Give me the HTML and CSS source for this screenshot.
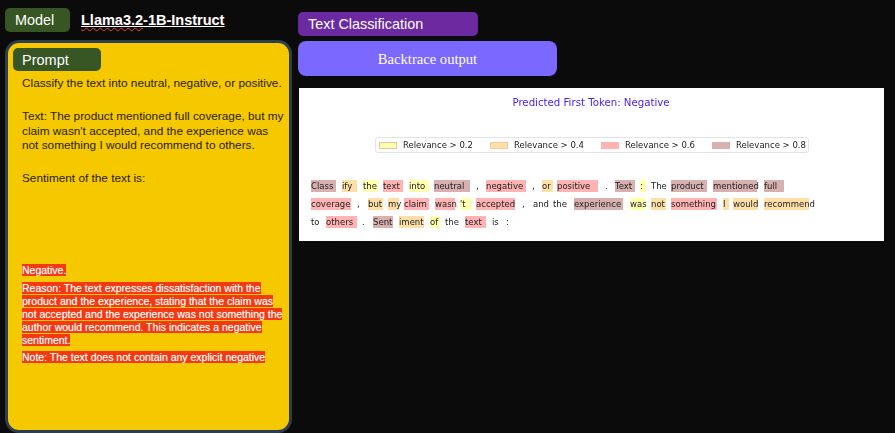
FILE: index.html
```html
<!DOCTYPE html>
<html lang="en">
<head>
<meta charset="utf-8">
<title>Backtrace output</title>
<link rel="stylesheet" href="styles.css">
</head>
<body>
<div class="app">
  <section class="left">
    <div class="model-row">
      <div class="badge model-badge">Model</div>
      <div class="model-name"><span class="misspelt">Llama3.2</span>-1B-Instruct</div>
    </div>
    <div class="panel">
      <div class="badge prompt-badge">Prompt</div>
      <div class="prompt">
        <p>Classify the text into neutral, negative, or positive.</p>
        <p>Text: The product mentioned full coverage, but my claim wasn't accepted, and the experience was not something I would recommend to others.</p>
        <p>Sentiment of the text is:</p>
      </div>
      <div class="output">
        <p><span>Negative.</span></p>
        <p><span>Reason: The text expresses dissatisfaction with the product and the experience, stating that the claim was not accepted and the experience was not something the author would recommend. This indicates a negative sentiment.</span></p>
        <p><span>Note: The text does not contain any explicit negative</span></p>
      </div>
    </div>
  </section>
  <section class="right">
    <div class="task">Text Classification</div>
    <div class="backtrace">Backtrace output</div>
    <div class="plot">
      <div class="plot-title">Predicted First Token: Negative</div>
      <div class="legend">
        <span class="key"><i class="swatch r2"></i>Relevance &gt; 0.2</span>
        <span class="key"><i class="swatch r4"></i>Relevance &gt; 0.4</span>
        <span class="key"><i class="swatch r6"></i>Relevance &gt; 0.6</span>
        <span class="key"><i class="swatch r8"></i>Relevance &gt; 0.8</span>
      </div>
      <div class="tokens">
        <div class="row">
          <span class="t r8" style="margin-left:0;width:25px">Class</span>
          <span class="t r4" style="margin-left:6px;width:15px">ify</span>
          <span class="t r2" style="margin-left:6px;width:15px">the</span>
          <span class="t r6" style="margin-left:5px;width:20px">text</span>
          <span class="t r2" style="margin-left:6px;width:20px">into</span>
          <span class="t r8" style="margin-left:5px;width:36px">neutral</span>
          <span class="t" style="margin-left:6px;width:4px">,</span>
          <span class="t r6" style="margin-left:6px;width:40px">negative</span>
          <span class="t" style="margin-left:6px;width:4px">,</span>
          <span class="t r4" style="margin-left:6px;width:11px">or</span>
          <span class="t r6" style="margin-left:4px;width:41px">positive</span>
          <span class="t" style="margin-left:7px;width:4px">.</span>
          <span class="t r8" style="margin-left:6px;width:20px">Text</span>
          <span class="t r2" style="margin-left:5px;width:6px">:</span>
          <span class="t" style="margin-left:5px;width:16px">The</span>
          <span class="t r8" style="margin-left:4px;width:36px">product</span>
          <span class="t r8" style="margin-left:6px;width:44px">mentioned</span>
          <span class="t r8" style="margin-left:7px;width:20px">full</span>
        </div>
        <div class="row">
          <span class="t r6" style="margin-left:0;width:40px">coverage</span>
          <span class="t" style="margin-left:6px;width:4px">,</span>
          <span class="t r4" style="margin-left:7px;width:15px">but</span>
          <span class="t r4" style="margin-left:5px;width:11px">my</span>
          <span class="t r6" style="margin-left:5px;width:25px">claim</span>
          <span class="t r6" style="margin-left:6px;width:20px">wasn</span>
          <span class="t r2" style="margin-left:5px;width:11px">'t</span>
          <span class="t r6" style="margin-left:5px;width:39px">accepted</span>
          <span class="t" style="margin-left:7px;width:4px">,</span>
          <span class="t" style="margin-left:7px;width:15px">and</span>
          <span class="t" style="margin-left:5px;width:15px">the</span>
          <span class="t r8" style="margin-left:6px;width:49px">experience</span>
          <span class="t r2" style="margin-left:7px;width:16px">was</span>
          <span class="t r4" style="margin-left:5px;width:15px">not</span>
          <span class="t r6" style="margin-left:5px;width:46px">something</span>
          <span class="t r4" style="margin-left:6px;width:6px">I</span>
          <span class="t r4" style="margin-left:4px;width:25px">would</span>
          <span class="t r4" style="margin-left:6px;width:45px">recommend</span>
        </div>
        <div class="row">
          <span class="t" style="margin-left:0;width:10px">to</span>
          <span class="t r6" style="margin-left:5px;width:31px">others</span>
          <span class="t" style="margin-left:5px;width:4px">.</span>
          <span class="t r8" style="margin-left:7px;width:20px">Sent</span>
          <span class="t r4" style="margin-left:6px;width:25px">iment</span>
          <span class="t r2" style="margin-left:6px;width:10px">of</span>
          <span class="t" style="margin-left:5px;width:15px">the</span>
          <span class="t r6" style="margin-left:5px;width:21px">text</span>
          <span class="t" style="margin-left:6px;width:8px">is</span>
          <span class="t" style="margin-left:6px;width:4px">:</span>
        </div>
      </div>
    </div>
  </section>
</div>
</body>
</html>
```
FILE: styles.css
```css
* { box-sizing: border-box; }
html, body { margin: 0; height: 100%; overflow: hidden; }
body { background: #0b0b0b; font-family: "Liberation Sans", Arial, sans-serif; color: #fff; }
.app { display: flex; height: 433px; padding-left: 5px; }
.left { width: 287px; display: flex; flex-direction: column; padding-top: 8px; }
.badge { background: #375623; border-radius: 5px; color: #fff; }
.model-row { display: flex; align-items: flex-start; gap: 11px; height: 32px; }
.model-badge { width: 65px; height: 24px; padding-left: 10px; font-size: 14.4px; line-height: 24px; }
.model-name { font-size: 14.5px; font-weight: 700; line-height: 25px; text-decoration: underline; text-shadow: 1px 0 0 rgba(60,20,20,.6); }
.misspelt { text-decoration: underline wavy #d04040 1px; text-underline-offset: 2px; }
.panel { height: 393px; background: #f5c800; border: 3px solid #2c3e50; border-radius: 14px; padding: 5px 5px 0; color: #2a1c00; }
.prompt-badge { width: 88px; height: 23px; padding-left: 9px; font-size: 14.5px; line-height: 24px; }
.prompt { padding: 0 0 0 9px; font-size: 11.8px; line-height: 14.6px; margin-top: 5px; }
.prompt p { margin: 0 0 18.5px; }
.output { padding: 0 0 0 9px; margin-top: 78px; font-size: 10.5px; line-height: 12.9px; color: #fff; text-shadow: 0 0 1px rgba(255,255,255,.5); }
.output p { margin: 0 0 5px; }
.output span { background: #f4380f; }
.right { padding: 12px 0 0 6px; width: 591px; }
.task { width: 180px; height: 24px; background: #6c2aa0; border-radius: 5px; padding-left: 10px; font-size: 14.4px; line-height: 24px; }
.backtrace { width: 259px; height: 35px; margin-top: 5px; background: #7b68ff; border-radius: 8px; text-align: center; font-family: "Liberation Serif", serif; font-size: 14.6px; line-height: 36px; }
.plot { width: 585px; height: 153px; margin: 12px 0 0 1px; background: #fff; padding-top: 8px; color: #222; font-family: "DejaVu Sans", sans-serif; font-size: 8.5px; }
.plot-title { text-align: center; color: #4a22f0; font-size: 10.2px; line-height: 13px; margin-left: -1px; filter: blur(.25px); }
.legend { display: flex; gap: 15px; width: 434px; height: 16px; margin: 28px 0 0 76px; padding-left: 3px; border: 1px solid #e4e4e4; border-radius: 3px; align-items: center; white-space: nowrap; filter: blur(.3px); }
.key { display: flex; align-items: center; width: 96px; }
.swatch { display: block; width: 18px; height: 7px; margin-right: 6px; }
.swatch.r2 { border: 1px solid #f5c0a0; }
.swatch.r4 { border: 1px solid #f8c8a0; }
.tokens { margin: 27px 0 0 12px; display: flex; flex-direction: column; gap: 6px; filter: blur(.3px); }
.row { display: flex; height: 12px; }
.t { display: block; height: 12px; line-height: 12px; white-space: nowrap; flex: none; }
.r2 { background: #ffffb0; }
.r4 { background: #ffdfa8; }
.r6 { background: #ffb3b3; }
.r8 { background: #d8b0b0; }
```
